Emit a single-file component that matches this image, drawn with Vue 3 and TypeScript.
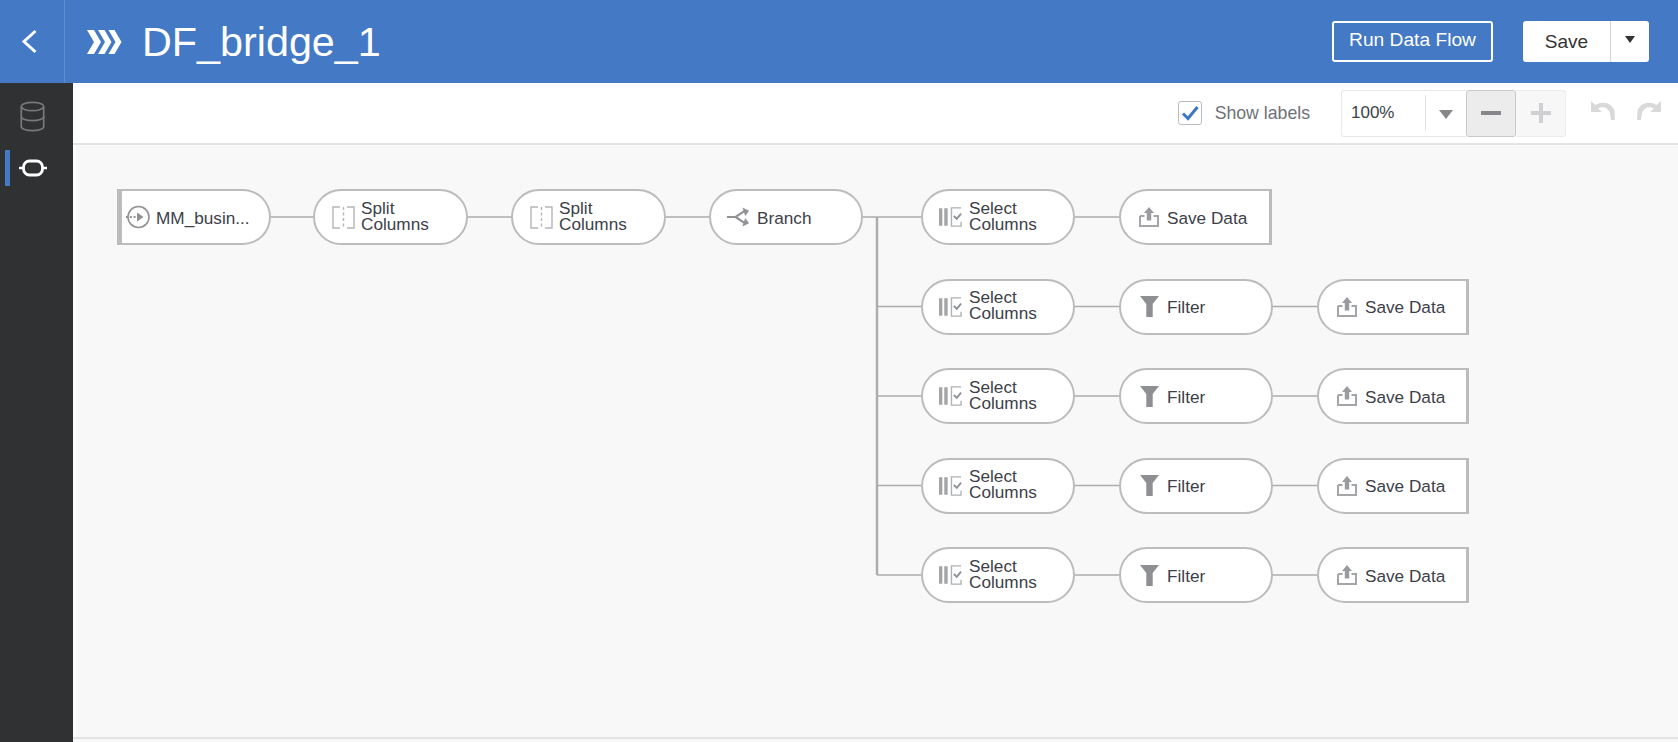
<script setup lang="ts">
type Kind = 'source' | 'split' | 'branch' | 'select' | 'filter' | 'save'
interface FlowNode { id: string; kind: Kind; x: number; y: number; w: number; lines: string[]; end?: 'start' | 'finish' }

const originX = 76
const originY = 145
const rowY = [189, 278.5, 368, 457.5, 547]

const nodes: FlowNode[] = [
  { id: 'src', kind: 'source', x: 117, y: rowY[0], w: 154, lines: ['MM_busin...'], end: 'start' },
  { id: 'sp1', kind: 'split', x: 313, y: rowY[0], w: 155, lines: ['Split', 'Columns'] },
  { id: 'sp2', kind: 'split', x: 511, y: rowY[0], w: 155, lines: ['Split', 'Columns'] },
  { id: 'br', kind: 'branch', x: 709, y: rowY[0], w: 154, lines: ['Branch'] },
  { id: 'sel0', kind: 'select', x: 921, y: rowY[0], w: 154, lines: ['Select', 'Columns'] },
  { id: 'save0', kind: 'save', x: 1119, y: rowY[0], w: 153, lines: ['Save Data'], end: 'finish' },
]
for (let i = 1; i < 5; i++) {
  nodes.push(
    { id: `sel${i}`, kind: 'select', x: 921, y: rowY[i], w: 154, lines: ['Select', 'Columns'] },
    { id: `fil${i}`, kind: 'filter', x: 1119, y: rowY[i], w: 154, lines: ['Filter'] },
    { id: `save${i}`, kind: 'save', x: 1317, y: rowY[i], w: 152, lines: ['Save Data'], end: 'finish' },
  )
}

const cy = (i: number) => rowY[i] + 28 - originY
const edges: string[] = [
  `M${270 - originX} ${cy(0)}H${921 - originX}`,
  `M${1075 - originX} ${cy(0)}H${1119 - originX}`,
  `M${877 - originX} ${cy(0)}V${cy(4)}`,
]
for (let i = 1; i < 5; i++) {
  edges.push(`M${877 - originX} ${cy(i)}H${921 - originX}`, `M${1075 - originX} ${cy(i)}H${1317 - originX}`)
}

function place(n: FlowNode) {
  return { left: `${n.x - originX}px`, top: `${n.y - originY}px`, width: `${n.w}px` }
}
</script>

<template>
  <div class="shell">
    <header class="topbar">
      <button class="back" aria-label="Back">
        <svg width="17" height="25" viewBox="0 0 17 25"><path d="M14.500 2 L3 12.500 L14.500 23" fill="none" stroke="#fff" stroke-width="3"/></svg>
      </button>
      <svg class="logo" width="36" height="26" viewBox="0 0 36 26">
        <path d="M0 1H7L14 13L7 25H0L7 13Z" fill="#fff"/>
        <path d="M11 1H17.500L24.500 13L17.500 25H11L18 13Z" fill="#fff"/>
        <path d="M21.500 1H27.500L34.500 13L27.500 25H21.500L28.500 13Z" fill="#fff"/>
      </svg>
      <h1 class="title">DF_bridge_1</h1>
      <div class="actions">
        <button class="run">Run Data Flow</button>
        <div class="save-group">
          <button class="save">Save</button>
          <button class="caret" aria-label="More"><span class="caret-shape"></span></button>
        </div>
      </div>
    </header>

    <div class="body">
      <nav class="sidebar">
        <div class="side-item">
          <svg width="25" height="31" viewBox="0 0 25 31" fill="none" stroke="#77797b" stroke-width="1.700">
            <ellipse cx="12.500" cy="5.500" rx="11.200" ry="4.200"/>
            <path d="M1.300 5.500V25.500c0 2.400 5 4.200 11.200 4.200s11.200-1.800 11.200-4.200V5.500"/>
            <path d="M1.300 15.500c0 2.400 5 4.200 11.200 4.200s11.200-1.800 11.200-4.200"/>
          </svg>
        </div>
        <div class="side-item active">
          <svg width="28" height="18" viewBox="0 0 28 18" fill="none" stroke="#fff" stroke-width="2.800">
            <rect x="4.500" y="2" width="19" height="14" rx="6"/>
            <path d="M0 9H4M24 9H28" stroke-width="2.400"/>
          </svg>
        </div>
      </nav>

      <main class="main">
        <div class="toolbar">
          <label class="show">
            <span class="check">
              <svg width="20" height="18" viewBox="0 0 20 18"><path d="M3 9.500 L8 14.500 L17.500 3" fill="none" stroke="#3f76c2" stroke-width="3"/></svg>
            </span>
            <span>Show labels</span>
          </label>
          <div class="zoom">
            <div class="zoom-field">
              <span class="zoom-value">100%</span>
              <span class="zoom-sep"></span>
              <span class="zoom-arrow"><span class="zoom-tri"></span></span>
            </div>
            <button class="zoom-btn minus" aria-label="Zoom out"><span class="bar"></span></button>
            <button class="zoom-btn plus" aria-label="Zoom in"><span class="bar"></span><span class="bar vert"></span></button>
          </div>
          <div class="history">
            <svg width="24" height="20" viewBox="0 0 24 20"><path d="M0 1 L0 12 L11 12 L7 8.500 C11 6 17 7 19 13 L20 20 L24 20 L23.500 11 C21 3 12 0.500 4.500 5 Z" fill="#d9d9d9"/></svg>
            <svg width="24" height="20" viewBox="0 0 24 20"><path d="M24 1 L24 12 L13 12 L17 8.500 C13 6 7 7 5 13 L4 20 L0 20 L0.500 11 C3 3 12 0.500 19.500 5 Z" fill="#d9d9d9"/></svg>
          </div>
        </div>

        <section class="canvas">
          <svg class="edges" width="1602" height="591">
            <path v-for="(d, i) in edges" :key="i" :d="d" fill="none" stroke="#adadad" :stroke-width="i === 2 ? 2.500 : 1.600"/>
          </svg>

          <div v-for="n in nodes" :key="n.id" class="node" :class="[n.kind, n.end]" :style="place(n)">
            <span class="icon">
              <svg v-if="n.kind === 'source'" width="24" height="24" viewBox="0 0 24 24" fill="none" stroke="#8f9193">
                <circle cx="12.500" cy="12" r="10.500" stroke-width="1.600"/>
                <path d="M0 12H10" stroke-width="1.800" stroke-dasharray="2 1.800"/>
                <path d="M11 7.500L17.500 12L11 16.500Z" fill="#8f9193" stroke="none"/>
              </svg>
              <svg v-else-if="n.kind === 'split'" width="23" height="23" viewBox="0 0 23 23" fill="none" stroke="#b4b5b7" stroke-width="1.400">
                <path d="M8 1H1V22H8M15 1H22V22H15"/>
                <path d="M11.500 1V22" stroke-dasharray="3 2.500"/>
              </svg>
              <svg v-else-if="n.kind === 'branch'" width="25" height="20" viewBox="0 0 25 20" fill="none" stroke="#909295" stroke-width="2.200">
                <path d="M0 10H9L18 4M9 10L18 16"/>
                <path d="M16 0L23 3.500L19 9ZM16 20L23 16.500L19 11Z" fill="#909295" stroke="none"/>
              </svg>
              <svg v-else-if="n.kind === 'select'" width="25" height="22" viewBox="0 0 25 22">
                <path d="M0 2H3.500V20H0ZM5.500 2H9V20H5.500Z" fill="#a2a4a6"/>
                <path d="M23 1.500H13V20.500H23V16" fill="none" stroke="#aeb0b2" stroke-width="1.400"/>
                <path d="M15.500 10L18.500 13L23 7.500" fill="none" stroke="#8f9193" stroke-width="2"/>
              </svg>
              <svg v-else-if="n.kind === 'filter'" width="19" height="21" viewBox="0 0 19 21">
                <path d="M0 0H19L12.700 8V21H6.300V8Z" fill="#8d8f92"/>
              </svg>
              <svg v-else width="20" height="20" viewBox="0 0 20 20">
                <path d="M1 9V19H19V9H14.500M5.500 9H1" fill="none" stroke="#a3a5a8" stroke-width="2"/>
                <path d="M10 0L15 6H12.200V13.500H7.800V6H5Z" fill="#999b9e"/>
              </svg>
            </span>
            <span class="label" :class="{ two: n.lines.length > 1 }"><span v-for="l in n.lines" :key="l" class="line">{{ l }}</span></span>
          </div>
        </section>
        <div class="foot"></div>
      </main>
    </div>
  </div>
</template>

<style>
html, body { margin: 0; padding: 0; overflow: hidden; }
</style>

<style scoped>
.shell {
  width: 1678px;
  height: 742px;
  display: flex;
  flex-direction: column;
  font-family: "Liberation Sans", Arial, sans-serif;
  color: #3c4047;
  overflow: hidden;
}
button { font-family: inherit; cursor: pointer; padding: 0; margin: 0; }

.topbar {
  height: 83px;
  flex: none;
  background: #4479c5;
  display: flex;
  align-items: center;
  color: #fff;
}
.back {
  width: 65px;
  height: 83px;
  background: transparent;
  border: 0;
  border-right: 1px solid #5f8ed2;
  display: flex;
  align-items: center;
  justify-content: center;
  padding-right: 5px;
}
.logo { margin-left: 22px; }
.title {
  margin: 0 0 0 19px;
  font-size: 41.300px;
  font-weight: 400;
  line-height: 48px;
  color: #fff;
}
.actions {
  margin-left: auto;
  margin-right: 29px;
  display: flex;
  align-items: center;
  gap: 30px;
}
.run {
  width: 161px;
  height: 41px;
  background: transparent;
  border: 2px solid #fff;
  border-radius: 3px;
  color: #fff;
  font-size: 19.200px;
  padding-bottom: 3px;
}
.save-group {
  display: flex;
  width: 126px;
  height: 41px;
  background: #fff;
  border-radius: 3px;
}
.save {
  width: 88px;
  height: 41px;
  background: transparent;
  border: 0;
  border-right: 1px solid #d4d4d4;
  color: #333;
  font-size: 19px;
}
.caret {
  flex: 1;
  background: transparent;
  border: 0;
  display: flex;
  align-items: center;
  justify-content: center;
}
.caret-shape {
  width: 0;
  height: 0;
  border-left: 5px solid transparent;
  border-right: 5px solid transparent;
  border-top: 7px solid #333;
  margin-bottom: 4px;
}

.body { flex: 1; display: flex; min-height: 0; }
.sidebar {
  width: 73px;
  flex: none;
  background: #2f3133;
  display: flex;
  flex-direction: column;
  padding-top: 16px;
  gap: 16px;
}
.side-item {
  height: 35px;
  display: flex;
  align-items: center;
  justify-content: center;
  padding-right: 8px;
  position: relative;
}
.side-item.active::before {
  content: "";
  position: absolute;
  left: 5px;
  top: 0;
  width: 5px;
  height: 36px;
  background: #4479c5;
}
.main { flex: 1; display: flex; flex-direction: column; min-width: 0; }

.toolbar {
  height: 62px;
  flex: none;
  box-sizing: border-box;
  background: #fff;
  border-bottom: 2px solid #e4e4e4;
  display: flex;
  align-items: center;
  justify-content: flex-end;
  padding-right: 17px;
  gap: 31px;
}
.show {
  display: flex;
  align-items: center;
  gap: 13px;
  font-size: 17.700px;
  color: #6f7276;
}
.check {
  width: 24px;
  height: 24px;
  box-sizing: border-box;
  border: 1px solid #b9bbbe;
  border-radius: 3px;
  background: #fff;
  display: flex;
  align-items: center;
  justify-content: center;
}
.zoom {
  display: flex;
  height: 47px;
  margin-right: -6px;
  box-sizing: border-box;
}
.zoom-field {
  width: 125px;
  box-sizing: border-box;
  border: 1px solid #e8e8e8;
  border-right: 0;
  border-radius: 3px 0 0 3px;
  display: flex;
  align-items: center;
  background: #fff;
}
.zoom-value { font-size: 17px; color: #3c4047; margin-left: 9px; width: 74px; }
.zoom-sep { width: 1px; height: 36px; background: #e2e2e2; }
.zoom-arrow { flex: 1; display: flex; justify-content: center; }
.zoom-tri {
  width: 0;
  height: 0;
  border-left: 7px solid transparent;
  border-right: 7px solid transparent;
  border-top: 9px solid #85878a;
  margin-top: 2px;
}
.zoom-btn {
  width: 50px;
  box-sizing: border-box;
  position: relative;
  display: flex;
  align-items: center;
  justify-content: center;
}
.minus { background: #ececec; border: 1px solid #c9c9c9; border-radius: 3px; }
.plus { background: #f7f7f7; border: 1px solid #ececec; border-left: 0; border-radius: 0 3px 3px 0; }
.bar { display: block; width: 20px; height: 4px; }
.minus .bar { background: #85878a; }
.plus .bar { background: #cfd0d1; }
.plus .bar.vert { position: absolute; width: 4px; height: 20px; }
.history { display: flex; gap: 22px; margin-bottom: 6px; }

.canvas {
  flex: 1;
  position: relative;
  background: #f8f8f8;
  border-left: 3px solid #fdfdfd;
  min-height: 0;
}
.foot { height: 5px; flex: none; box-sizing: border-box; border-top: 2px solid #e4e4e4; background: #f8f8f8; }
.edges { position: absolute; left: 0; top: 0; }

.node {
  position: absolute;
  height: 56px;
  box-sizing: border-box;
  background: #fff;
  border: 2px solid #bcbcbc;
  border-radius: 28px;
  display: flex;
  align-items: center;
  padding-left: 16px;
  gap: 6px;
  font-size: 17.200px;
  color: #3d4048;
}
.node.start {
  border-left-width: 5px;
  border-radius: 0 28px 28px 0;
  padding-left: 4px;
}
.node.finish {
  border-right-width: 3px;
  border-radius: 28px 0 0 28px;
}
.icon { width: 24px; display: flex; justify-content: center; flex: none; }
.label { display: flex; flex-direction: column; line-height: 16px; margin-top: 1px; white-space: nowrap; }
.label.two { margin-top: -3px; }
.line { display: block; }
</style>
